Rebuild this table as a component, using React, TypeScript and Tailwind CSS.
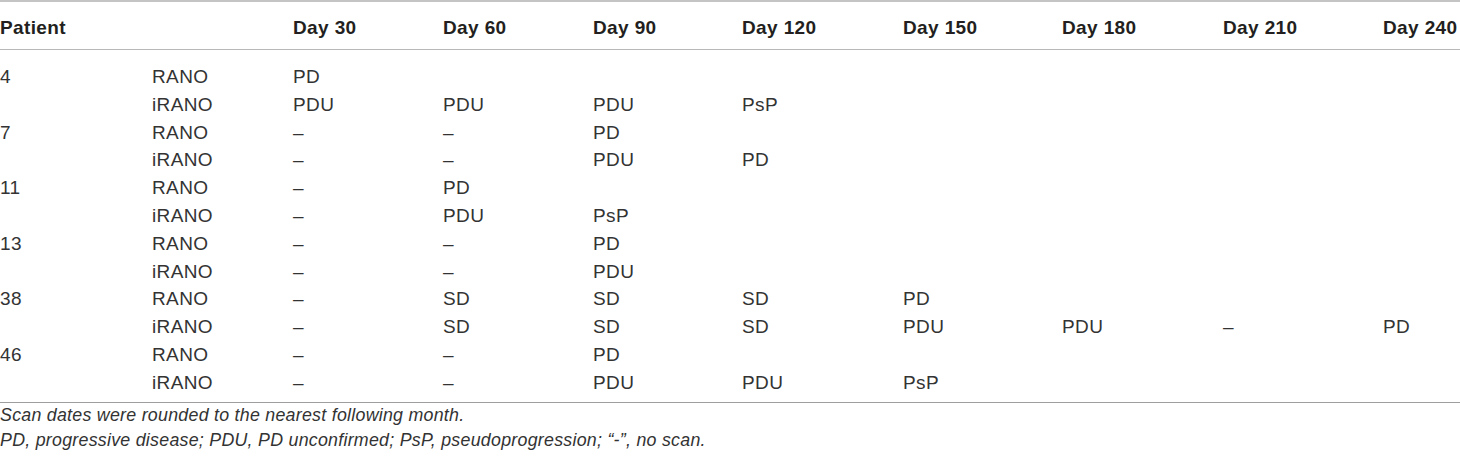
const cols =
  "grid grid-cols-[152px_141px_150px_150px_149px_161px_159px_161px_160px_1fr]";

const days = ["Day 30", "Day 60", "Day 90", "Day 120", "Day 150", "Day 180", "Day 210", "Day 240"];

const patients = [
  { id: "4", rano: ["PD"], irano: ["PDU", "PDU", "PDU", "PsP"] },
  { id: "7", rano: ["–", "–", "PD"], irano: ["–", "–", "PDU", "PD"] },
  { id: "11", rano: ["–", "PD"], irano: ["–", "PDU", "PsP"] },
  { id: "13", rano: ["–", "–", "PD"], irano: ["–", "–", "PDU"] },
  { id: "38", rano: ["–", "SD", "SD", "SD", "PD"], irano: ["–", "SD", "SD", "SD", "PDU", "PDU", "–", "PD"] },
  { id: "46", rano: ["–", "–", "PD"], irano: ["–", "–", "PDU", "PDU", "PsP"] },
];

const Row = ({ first, label, values }: { first: string; label: string; values: string[] }) => (
  <div className={`${cols} h-[27.8px] items-center`}>
    <div>{first}</div>
    <div>{label}</div>
    {days.map((d, i) => (
      <div key={d}>{values[i] ?? ""}</div>
    ))}
  </div>
);

export default function App() {
  return (
    <div className="w-[1460px] h-[460px] bg-white text-[#231f20] font-['Liberation_Sans',Arial,sans-serif] text-[19px] tracking-[0.02em] leading-[27.8px]">
      <div className="border-t-2 border-[#c4c4c4]">
        <div className={`${cols} h-[48px] items-center pt-[4px] font-bold border-b border-[#b8b8b8]`}>
          <div>Patient</div>
          <div></div>
          {days.map((d) => (
            <div key={d}>{d}</div>
          ))}
        </div>

        <div className="pt-[13px] pb-[5px] border-b-[1.5px] border-[#9e9e9e] text-[#333]">
          {patients.map((p) => (
            <div key={p.id}>
              <Row first={p.id} label="RANO" values={p.rano} />
              <Row first="" label="iRANO" values={p.irano} />
            </div>
          ))}
        </div>

        <div className="italic text-[17.8px] tracking-[0.015em] leading-[25px] text-[#333]">
          <p>Scan dates were rounded to the nearest following month.</p>
          <p>PD, progressive disease; PDU, PD unconfirmed; PsP, pseudoprogression; “-”, no scan.</p>
        </div>
      </div>
    </div>
  );
}
